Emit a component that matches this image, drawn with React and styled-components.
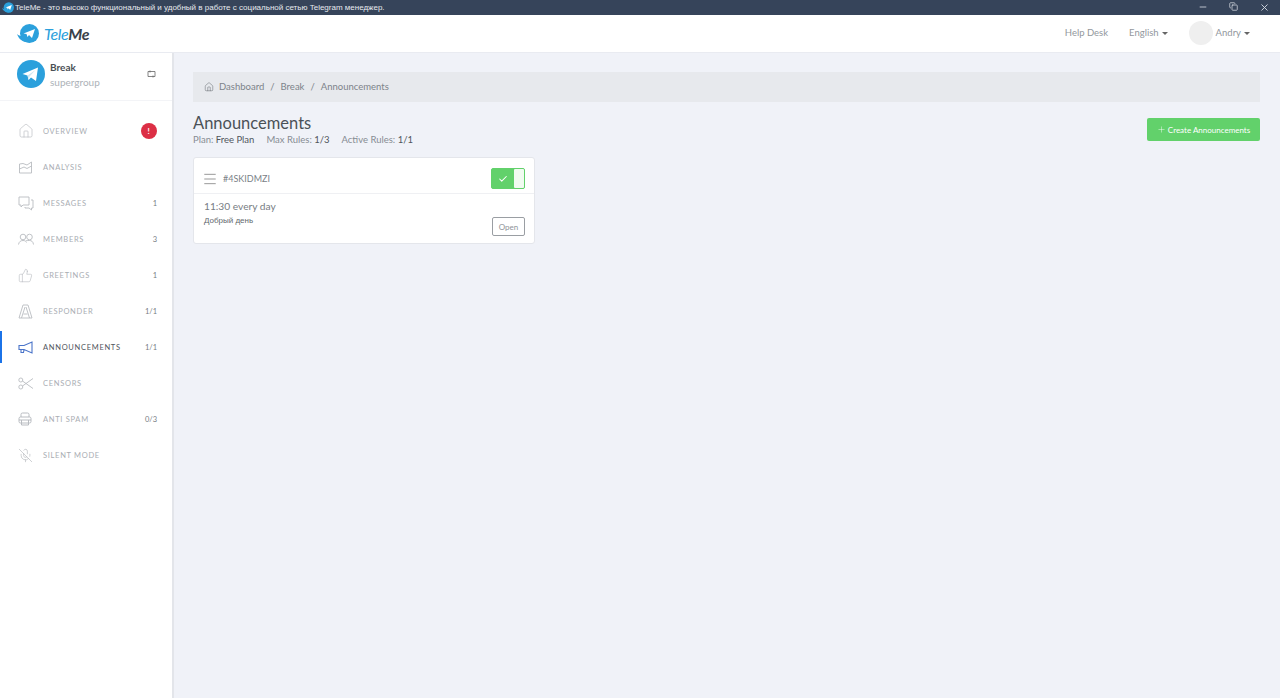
import React from "react";
import styled, { createGlobalStyle } from "styled-components";
import { Home, ThumbsUp, MicOff, Check, Menu, Plus, Minus, X, Copy } from "lucide-react";

const font = `"Lato", "Noto Sans", sans-serif`;

const GlobalStyle = createGlobalStyle`
  html, body { margin: 0; padding: 0; height: 100%; overflow: hidden; }
  body { font-family: ${font}; background: #f0f2f8; color: #6c757d; }
  #root { height: 100%; }
  * { box-sizing: border-box; }
`;

const Page = styled.div`
  display: flex;
  flex-direction: column;
  height: 698px;
`;

const TitleBar = styled.div`
  height: 15px;
  flex: none;
  background: #36445a;
  color: #e6e9ee;
  display: flex;
  align-items: center;
  font: 8px "Liberation Sans", Arial, sans-serif;
  padding-left: 2px;
`;

const TitleText = styled.span`
  margin-left: 1px;
  flex: 1;
  white-space: nowrap;
`;

const WindowButtons = styled.div`
  display: flex;
  color: #d5dae2;
`;

const WindowButton = styled.span`
  width: 31px;
  display: flex;
  justify-content: center;
`;

const Header = styled.header`
  height: 38px;
  flex: none;
  background: #fff;
  border-bottom: 1px solid #e9ebf1;
  display: flex;
  align-items: center;
  padding: 0 30px 1px 17px;
  font-size: 9.5px;
  color: #92979d;
`;

const Brand = styled.div`
  display: flex;
  align-items: center;
  gap: 5px;
  flex: 1;
`;

const BrandName = styled.span`
  font-size: 16px;
  font-style: italic;
  font-weight: 400;
  letter-spacing: -0.4px;
  color: #2ba0dc;
  & b {
    font-weight: 700;
    color: #3a4149;
  }
`;

const HeaderLink = styled.span`
  display: flex;
  align-items: center;
  margin-left: ${({ gap }) => gap}px;
`;

const LinkText = styled.span`
  margin-bottom: 2px;
`;

const Caret = styled.i`
  width: 0;
  height: 0;
  margin-left: 3px;
  border-left: 3px solid transparent;
  border-right: 3px solid transparent;
  border-top: 3px solid #666;
`;

const Avatar = styled.span`
  width: 24px;
  height: 24px;
  border-radius: 50%;
  background: #efefef;
  margin-right: 3px;
`;

const Body = styled.div`
  flex: 1;
  display: flex;
  min-height: 0;
`;

const Sidebar = styled.aside`
  width: 174px;
  flex: none;
  background: #fff;
  border-right: 2px solid #e3e5ea;
`;

const GroupCard = styled.div`
  height: 48px;
  display: flex;
  align-items: center;
  padding: 0 16px 5px 17px;
  border-bottom: 1px solid #f3f4f7;
`;

const GroupInfo = styled.div`
  flex: 1;
  margin-left: 5px;
  padding-top: 2px;
`;

const GroupName = styled.div`
  font-size: 10px;
  font-weight: 700;
  line-height: 14px;
  color: #4a4f55;
`;

const GroupType = styled.div`
  font-size: 10px;
  line-height: 16px;
  color: #adb2b8;
`;

const Nav = styled.nav`
  display: flex;
  flex-direction: column;
  gap: 4px;
  padding-top: 14px;
`;

const NavItem = styled.div`
  height: 32px;
  display: flex;
  align-items: center;
  padding: 0 15px 0 16px;
  border-left: 2px solid ${({ active }) => (active ? "#1b73e8" : "transparent")};
  font-size: 7.5px;
  letter-spacing: 0.7px;
  color: ${({ active }) => (active ? "#50555c" : "#a9adb3")};
`;

const NavIcon = styled.span`
  width: 25px;
  display: flex;
  color: ${({ active }) => (active ? "#4a74c9" : "#b9bcc1")};
`;

const NavLabel = styled.span`
  flex: 1;
`;

const NavCount = styled.span`
  letter-spacing: 0;
  color: #777c82;
`;

const AlertBadge = styled.span`
  width: 16px;
  height: 16px;
  border-radius: 50%;
  background: #dc2f45;
  color: #fff;
  font-size: 8px;
  font-weight: 700;
  display: flex;
  align-items: center;
  justify-content: center;
`;

const Content = styled.main`
  flex: 1;
  padding: 19px 20px 0 19px;
`;

const Breadcrumb = styled.div`
  height: 30px;
  background: #e7e9ed;
  display: flex;
  align-items: center;
  padding: 0 0 1px 11px;
  font-size: 9.5px;
  color: #7d838a;
`;

const Crumb = styled.span`
  margin-left: ${({ first }) => (first ? 5 : 0)}px;
`;

const Slash = styled.span`
  margin: 0 6px;
`;

const TitleRow = styled.div`
  display: flex;
  justify-content: space-between;
  align-items: flex-start;
  margin-top: 11px;
`;

const Heading = styled.h1`
  margin: 0;
  font-size: 16.5px;
  font-weight: 400;
  line-height: 20px;
  color: #4b5157;
`;

const Meta = styled.div`
  display: flex;
  gap: 12px;
  font-size: 9.5px;
  line-height: 13px;
  color: #868c93;
  & b {
    font-weight: 400;
    color: #50565c;
  }
`;

const CreateButton = styled.button`
  width: 113px;
  height: 23px;
  margin-top: 5px;
  border: 0;
  border-radius: 2px;
  background: #62d16b;
  color: #fff;
  font: 8px ${font};
  display: flex;
  align-items: center;
  justify-content: center;
  gap: 2px;
`;

const Card = styled.section`
  width: 342px;
  height: 87px;
  margin-top: 11px;
  background: #fff;
  border: 1px solid #e4e6eb;
  border-radius: 3px;
`;

const CardHead = styled.div`
  height: 36px;
  display: flex;
  align-items: center;
  padding: 6px 9px 0 8px;
  border-bottom: 1px solid #eff0f3;
  font-size: 9px;
  color: #7b8187;
`;

const CardId = styled.span`
  flex: 1;
  margin-left: 5px;
`;

const Toggle = styled.div`
  width: 34px;
  height: 21px;
  border-radius: 2px;
  background: #62d16b;
  border: 1px solid #62d16b;
  display: flex;
  justify-content: flex-end;
`;

const ToggleMark = styled.span`
  flex: 1;
  display: flex;
  align-items: center;
  justify-content: center;
  color: #fff;
`;

const ToggleKnob = styled.span`
  width: 10px;
  background: #f1fbf1;
  border-radius: 1px;
`;

const CardBody = styled.div`
  position: relative;
  padding: 6px 10px 0 10px;
`;

const Schedule = styled.div`
  font-size: 10.2px;
  line-height: 13px;
  color: #777d83;
`;

const Message = styled.div`
  font: 8px/12px "Liberation Sans", Arial, sans-serif;
  margin-top: 2px;
  color: #62676d;
`;

const OpenButton = styled.button`
  position: absolute;
  right: 9px;
  top: 23px;
  width: 33px;
  height: 19px;
  padding: 0;
  background: #fff;
  border: 1px solid #9a9ea3;
  border-radius: 2px;
  color: #8e9398;
  font: 8px ${font};
`;

const Logo = () => (
  <svg width="22" height="19" viewBox="0 0 22 19">
    <circle cx="12.500" cy="9.500" r="9.500" fill="#2ba0dc" />
    <path d="M0 10c3 3 7 2 10 4l3 4c-6 1-11-2-13-8z" fill="#2ba0dc" />
    <path d="M6.500 9.500L18 5l-3 9-3-3-1.500 2-1-3z" fill="#fff" />
  </svg>
);

const TelegramAvatar = () => (
  <svg width="28" height="28" viewBox="0 0 28 28">
    <circle cx="14" cy="14" r="14" fill="#2ba0dc" />
    <path d="M5.500 14L21 7.500 19 21l-5-3.500-2.500 2.500-1-4.500z" fill="#fff" />
    <path d="M10.500 15.500l8-5.500-6 6.500-.5 3.500z" fill="#cfe6f3" />
  </svg>
);

const SwitchIcon = () => (
  <svg width="9" height="8" viewBox="0 0 9 8" fill="none" stroke="#666" strokeWidth="0.8">
    <path d="M1 1.500h7v5H1zM3 .5v2M6 5.500v2" />
  </svg>
);

const AnalysisIcon = () => (
  <svg width="15" height="14" viewBox="0 0 15 14" fill="none" stroke="currentColor" strokeWidth="0.9">
    <path d="M1.500 4v9h12V2L9 5 5 3.500zM1.500 9L6 7l3 1.500L13.500 6" />
  </svg>
);

const MessagesIcon = () => (
  <svg width="16" height="15" viewBox="0 0 16 15" fill="none" stroke="currentColor" strokeWidth="0.9">
    <path d="M1 1h10v8H5l-2 2V9H1zM13 4h2v8h-1.500v2L11 12H7v-1" />
  </svg>
);

const MembersIcon = () => (
  <svg width="16" height="13" viewBox="0 0 16 13" fill="none" stroke="currentColor" strokeWidth="0.9">
    <circle cx="5" cy="4" r="2.800" />
    <circle cx="11.500" cy="4" r="2.800" />
    <path d="M.5 11.500C1 8.500 3 7.500 5 7.500s3 .8 3.500 2M8 7.800c1-.3 2.300-.3 3.500-.3 2 0 3.600 1 4 4" />
  </svg>
);

const ResponderIcon = () => (
  <svg width="15" height="15" viewBox="0 0 15 15" fill="none" stroke="currentColor" strokeWidth="0.9">
    <path d="M1 14L5 1h5l4 13zM3.500 14L7 3M11.500 14L8 3M5.500 10h4" />
  </svg>
);

const MegaphoneIcon = () => (
  <svg width="15" height="15" viewBox="0 0 15 15" fill="none" stroke="currentColor" strokeWidth="1.1">
    <path d="M1 5.500h5L14 2v11L6 9.500H1zM3 9.500v3h2.500l.5-3" />
  </svg>
);

const ScissorsIcon = () => (
  <svg width="15" height="13" viewBox="0 0 15 13" fill="none" stroke="currentColor" strokeWidth="0.9">
    <circle cx="2.800" cy="3" r="2" />
    <circle cx="2.800" cy="10" r="2" />
    <path d="M4.500 4L15 11.500M4.500 9L15 1.500" />
  </svg>
);

const SpamIcon = () => (
  <svg width="14" height="14" viewBox="0 0 14 14" fill="none" stroke="currentColor" strokeWidth="1">
    <path d="M3 5V2.500A1.500 1.500 0 0 1 4.500 1h5A1.500 1.500 0 0 1 11 2.500V5" />
    <rect x="1" y="5" width="12" height="6" rx="1.500" />
    <path d="M1 8h12M3.500 8v5h7V8" />
  </svg>
);

const navItems = [
  { label: "OVERVIEW", icon: <Home size={16} strokeWidth={1} />, alert: true },
  { label: "ANALYSIS", icon: <AnalysisIcon /> },
  { label: "MESSAGES", icon: <MessagesIcon />, count: "1" },
  { label: "MEMBERS", icon: <MembersIcon />, count: "3" },
  { label: "GREETINGS", icon: <ThumbsUp size={15} strokeWidth={1} />, count: "1" },
  { label: "RESPONDER", icon: <ResponderIcon />, count: "1/1" },
  { label: "ANNOUNCEMENTS", icon: <MegaphoneIcon />, count: "1/1", active: true },
  { label: "CENSORS", icon: <ScissorsIcon /> },
  { label: "ANTI SPAM", icon: <SpamIcon />, count: "0/3" },
  { label: "SILENT MODE", icon: <MicOff size={15} strokeWidth={1.1} /> },
];

export default function App() {
  return (
    <Page>
      <GlobalStyle />
      <TitleBar>
        <svg width="12" height="11" viewBox="0 0 22 19">
          <circle cx="12.500" cy="9.500" r="9.500" fill="#2ba0dc" />
          <path d="M0 10c3 3 7 2 10 4l3 4c-6 1-11-2-13-8z" fill="#2ba0dc" />
          <path d="M6.500 9.500L18 5l-3 9-3-3-1.500 2-1-3z" fill="#fff" />
        </svg>
        <TitleText>TeleMe - это высоко функциональный и удобный в работе с социальной сетью Telegram менеджер.</TitleText>
        <WindowButtons>
          <WindowButton><Minus size={10} /></WindowButton>
          <WindowButton><Copy size={9} /></WindowButton>
          <WindowButton><X size={11} /></WindowButton>
        </WindowButtons>
      </TitleBar>
      <Header>
        <Brand>
          <Logo />
          <BrandName>Tele<b>Me</b></BrandName>
        </Brand>
        <HeaderLink><LinkText>Help Desk</LinkText></HeaderLink>
        <HeaderLink gap={21}><LinkText>English</LinkText><Caret /></HeaderLink>
        <HeaderLink gap={21}>
          <Avatar />
          <LinkText>Andry</LinkText><Caret />
        </HeaderLink>
      </Header>
      <Body>
        <Sidebar>
          <GroupCard>
            <TelegramAvatar />
            <GroupInfo>
              <GroupName>Break</GroupName>
              <GroupType>supergroup</GroupType>
            </GroupInfo>
            <SwitchIcon />
          </GroupCard>
          <Nav>
            {navItems.map((item) => (
              <NavItem key={item.label} active={item.active}>
                <NavIcon active={item.active}>{item.icon}</NavIcon>
                <NavLabel>{item.label}</NavLabel>
                {item.alert && <AlertBadge>!</AlertBadge>}
                {item.count && <NavCount>{item.count}</NavCount>}
              </NavItem>
            ))}
          </Nav>
        </Sidebar>
        <Content>
          <Breadcrumb>
            <Home size={10} strokeWidth={1.2} color="#5f656b" />
            <Crumb first>Dashboard</Crumb>
            <Slash>/</Slash>
            <Crumb>Break</Crumb>
            <Slash>/</Slash>
            <Crumb>Announcements</Crumb>
          </Breadcrumb>
          <TitleRow>
            <div>
              <Heading>Announcements</Heading>
              <Meta>
                <span>Plan: <b>Free Plan</b></span>
                <span>Max Rules: <b>1/3</b></span>
                <span>Active Rules: <b>1/1</b></span>
              </Meta>
            </div>
            <CreateButton><Plus size={9} strokeWidth={1.2} />Create Announcements</CreateButton>
          </TitleRow>
          <Card>
            <CardHead>
              <Menu size={16} strokeWidth={0.9} color="#555" />
              <CardId>#4SKIDMZI</CardId>
              <Toggle>
                <ToggleMark><Check size={10} strokeWidth={2.5} /></ToggleMark>
                <ToggleKnob />
              </Toggle>
            </CardHead>
            <CardBody>
              <Schedule>11:30 every day</Schedule>
              <Message>Добрый день</Message>
              <OpenButton>Open</OpenButton>
            </CardBody>
          </Card>
        </Content>
      </Body>
    </Page>
  );
}
